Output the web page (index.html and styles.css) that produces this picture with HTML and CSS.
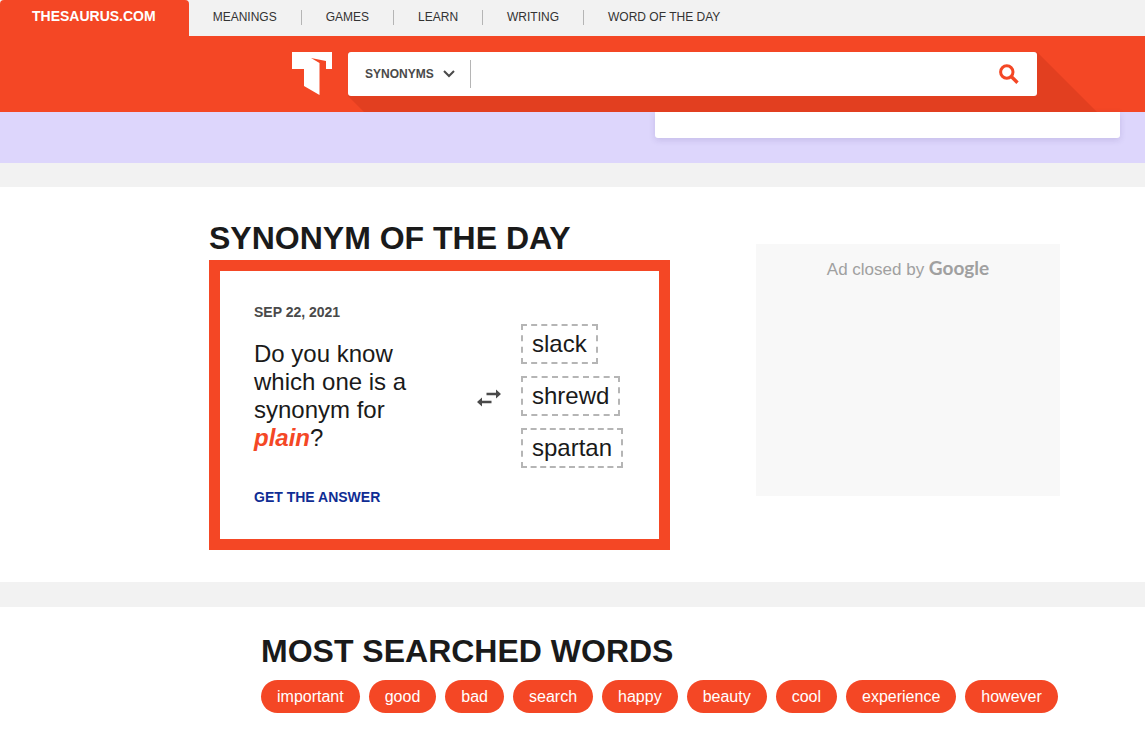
FILE: index.html
```html
<!DOCTYPE html>
<html lang="en">
<head>
<meta charset="utf-8">
<meta name="viewport" content="width=device-width, initial-scale=1">
<title>Thesaurus.com</title>
<link rel="stylesheet" href="styles.css">
</head>
<body>
<nav class="topbar" aria-label="Sections">
  <a class="site-tab" href="#">THESAURUS.COM</a>
  <ul class="topnav">
    <li><a href="#">MEANINGS</a></li>
    <li><a href="#">GAMES</a></li>
    <li><a href="#">LEARN</a></li>
    <li><a href="#">WRITING</a></li>
    <li><a href="#">WORD OF THE DAY</a></li>
  </ul>
</nav>
<header class="header">
  <a class="logo" href="#" aria-label="Home">
    <svg width="40" height="43" viewBox="0 0 40 43" aria-hidden="true">
      <path fill="#fff" d="M0 0H40V17H34V9L19 6L27.500 11V43L12 34V17H0Z"/>
    </svg>
  </a>
  <form class="search">
    <div class="search-box">
      <div class="mode">
        <select class="mode-select" aria-label="Search mode">
          <option>SYNONYMS</option>
          <option>DEFINITIONS</option>
        </select>
        <svg class="mode-arrow" width="12" height="8" viewBox="0 0 12 8" aria-hidden="true"><path d="M1 1L6 6L11 1" fill="none" stroke="#4a4a4a" stroke-width="2"/></svg>
      </div>
      <input class="search-input" type="text" aria-label="Search">
      <button class="search-button" type="button" aria-label="Search">
        <svg width="20" height="20" viewBox="0 0 20 20" aria-hidden="true"><circle cx="7.800" cy="8" r="6.200" fill="none" stroke="#f44725" stroke-width="3"/><path d="M12 12.200L18.500 18.700" stroke="#f44725" stroke-width="3.400"/></svg>
      </button>
    </div>
  </form>
</header>
<main>
  <section class="hero"><div class="hero-card"></div></section>
  <section class="daily">
    <div class="daily-main">
      <h2 class="title">SYNONYM OF THE DAY</h2>
      <article class="quiz">
        <div class="quiz-text">
          <p class="date">SEP 22, 2021</p>
          <p class="question">Do you know which one is a synonym for <em class="word">plain</em>?</p>
          <a class="answer" href="#">GET THE ANSWER</a>
        </div>
        <svg class="swap" width="24" height="18" viewBox="0 0 24 18" aria-hidden="true"><path fill="#4a4a4a" d="M9.500 3.800H19V0.500L24 5L19 9.500V6.200H9.500ZM14.500 11.800H5V8.500L0 13L5 17.500V14.200H14.500Z"/></svg>
        <ul class="choices">
          <li>slack</li>
          <li>shrewd</li>
          <li>spartan</li>
        </ul>
      </article>
    </div>
    <aside class="ad">Ad closed by <span class="brand">Google</span></aside>
  </section>
  <section class="popular">
    <h2 class="title">MOST SEARCHED WORDS</h2>
    <div class="pills">
      <a href="#">important</a>
      <a href="#">good</a>
      <a href="#">bad</a>
      <a href="#">search</a>
      <a href="#">happy</a>
      <a href="#">beauty</a>
      <a href="#">cool</a>
      <a href="#">experience</a>
      <a href="#">however</a>
    </div>
  </section>
</main>
</body>
</html>
```
FILE: styles.css
```css
* { box-sizing: border-box; }
body {
  margin: 0;
  background: #fff;
  color: #1a1a1a;
  font-family: "Liberation Sans", Arial, sans-serif;
}
a { text-decoration: none; }
ul { list-style: none; margin: 0; padding: 0; }
p { margin: 0; }
svg { display: block; }

.topbar {
  display: flex;
  height: 36px;
  background: #f2f2f2;
}
.site-tab {
  padding: 0 33px 0 32px;
  border-radius: 4px 4px 0 0;
  background: #f44725;
  color: #fff;
  font-size: 14px;
  font-weight: bold;
  line-height: 33px;
}
.topnav { display: flex; align-items: center; padding-bottom: 2px; }
.topnav li { padding: 0 24px; line-height: 15px; }
.topnav li + li { border-left: 1px solid #b5b5b5; }
.topnav a { display: block; color: #333; font-size: 12px; line-height: 15px; }

.header {
  display: flex;
  gap: 16px;
  padding: 16px 108px 16px 292px;
  background: #f44725;
}
.search { position: relative; flex: 1; }
.search::before {
  content: "";
  position: absolute;
  top: 0;
  left: 0;
  right: -60px;
  height: 60px;
  background: #e23f20;
  clip-path: polygon(0 0, calc(100% - 60px) 0, 100% 100%, 16px 100%, 0 44px);
}
.search-box {
  position: relative;
  display: flex;
  align-items: center;
  height: 44px;
  border-radius: 3px;
  background: #fff;
}
.mode {
  display: flex;
  align-items: center;
  gap: 8px;
  height: 28px;
  padding: 0 15px 0 17px;
  border-right: 1px solid #b5b5b5;
}
.mode-select {
  appearance: none;
  width: 70px;
  padding: 0;
  border: 0;
  background: none;
  color: #4a4a4a;
  font: bold 12px "Liberation Sans", Arial, sans-serif;
}
.search-input {
  flex: 1;
  min-width: 0;
  height: 44px;
  padding: 0 12px;
  border: 0;
  outline: 0;
  background: none;
  font: 16px "Liberation Sans", Arial, sans-serif;
}
.search-button {
  padding: 8px 18px;
  border: 0;
  background: none;
}

.hero {
  display: flex;
  justify-content: flex-end;
  padding: 0 25px 25px;
  background: #ddd6fc;
}
.hero-card {
  width: 465px;
  height: 26px;
  border-radius: 0 0 3px 3px;
  background: #fff;
  box-shadow: 0 2px 6px rgba(60, 40, 120, 0.15);
}

.title {
  margin: 0;
  font-size: 32px;
  line-height: 40px;
}
.daily {
  display: flex;
  justify-content: space-between;
  align-items: flex-start;
  padding: 31px 85px 32px 209px;
  border-top: 24px solid #f2f2f2;
  border-bottom: 25px solid #f2f2f2;
}
.quiz {
  display: flex;
  width: 461px;
  margin-top: 2px;
  padding: 32px 34px 33px;
  border: 11px solid #f44725;
}
.quiz-text { width: 176px; }
.date {
  color: #4a4a4a;
  font-size: 14px;
  font-weight: bold;
  line-height: 18px;
}
.question {
  margin: 19px 0 36px;
  font-size: 24px;
  line-height: 28px;
}
.word { color: #f44725; font-weight: bold; }
.answer {
  display: block;
  color: #0f2d94;
  font-size: 14px;
  font-weight: bold;
  line-height: 18px;
}
.swap { margin: 86px 20px 0 47px; }
.choices {
  display: flex;
  flex-direction: column;
  align-items: flex-start;
  gap: 12px;
  padding-top: 21px;
}
.choices li {
  padding: 4px 9px;
  border: 2px dashed #b5b5b5;
  font-size: 24px;
  line-height: 28px;
}
.ad {
  width: 304px;
  height: 252px;
  margin-top: 26px;
  padding-top: 12px;
  background: #f8f8f8;
  color: #a0a0a0;
  font-size: 17px;
  line-height: 24px;
  text-align: center;
}
.brand { font-family: Lato, sans-serif; font-size: 19px; font-weight: bold; }

.popular { padding: 24px 85px 24px 261px; }
.pills {
  display: flex;
  flex-wrap: wrap;
  gap: 9px;
  margin-top: 9px;
}
.pills a {
  padding: 0 16px;
  border-radius: 17px;
  background: #f44725;
  color: #fff;
  font-size: 16px;
  line-height: 33px;
}
```
